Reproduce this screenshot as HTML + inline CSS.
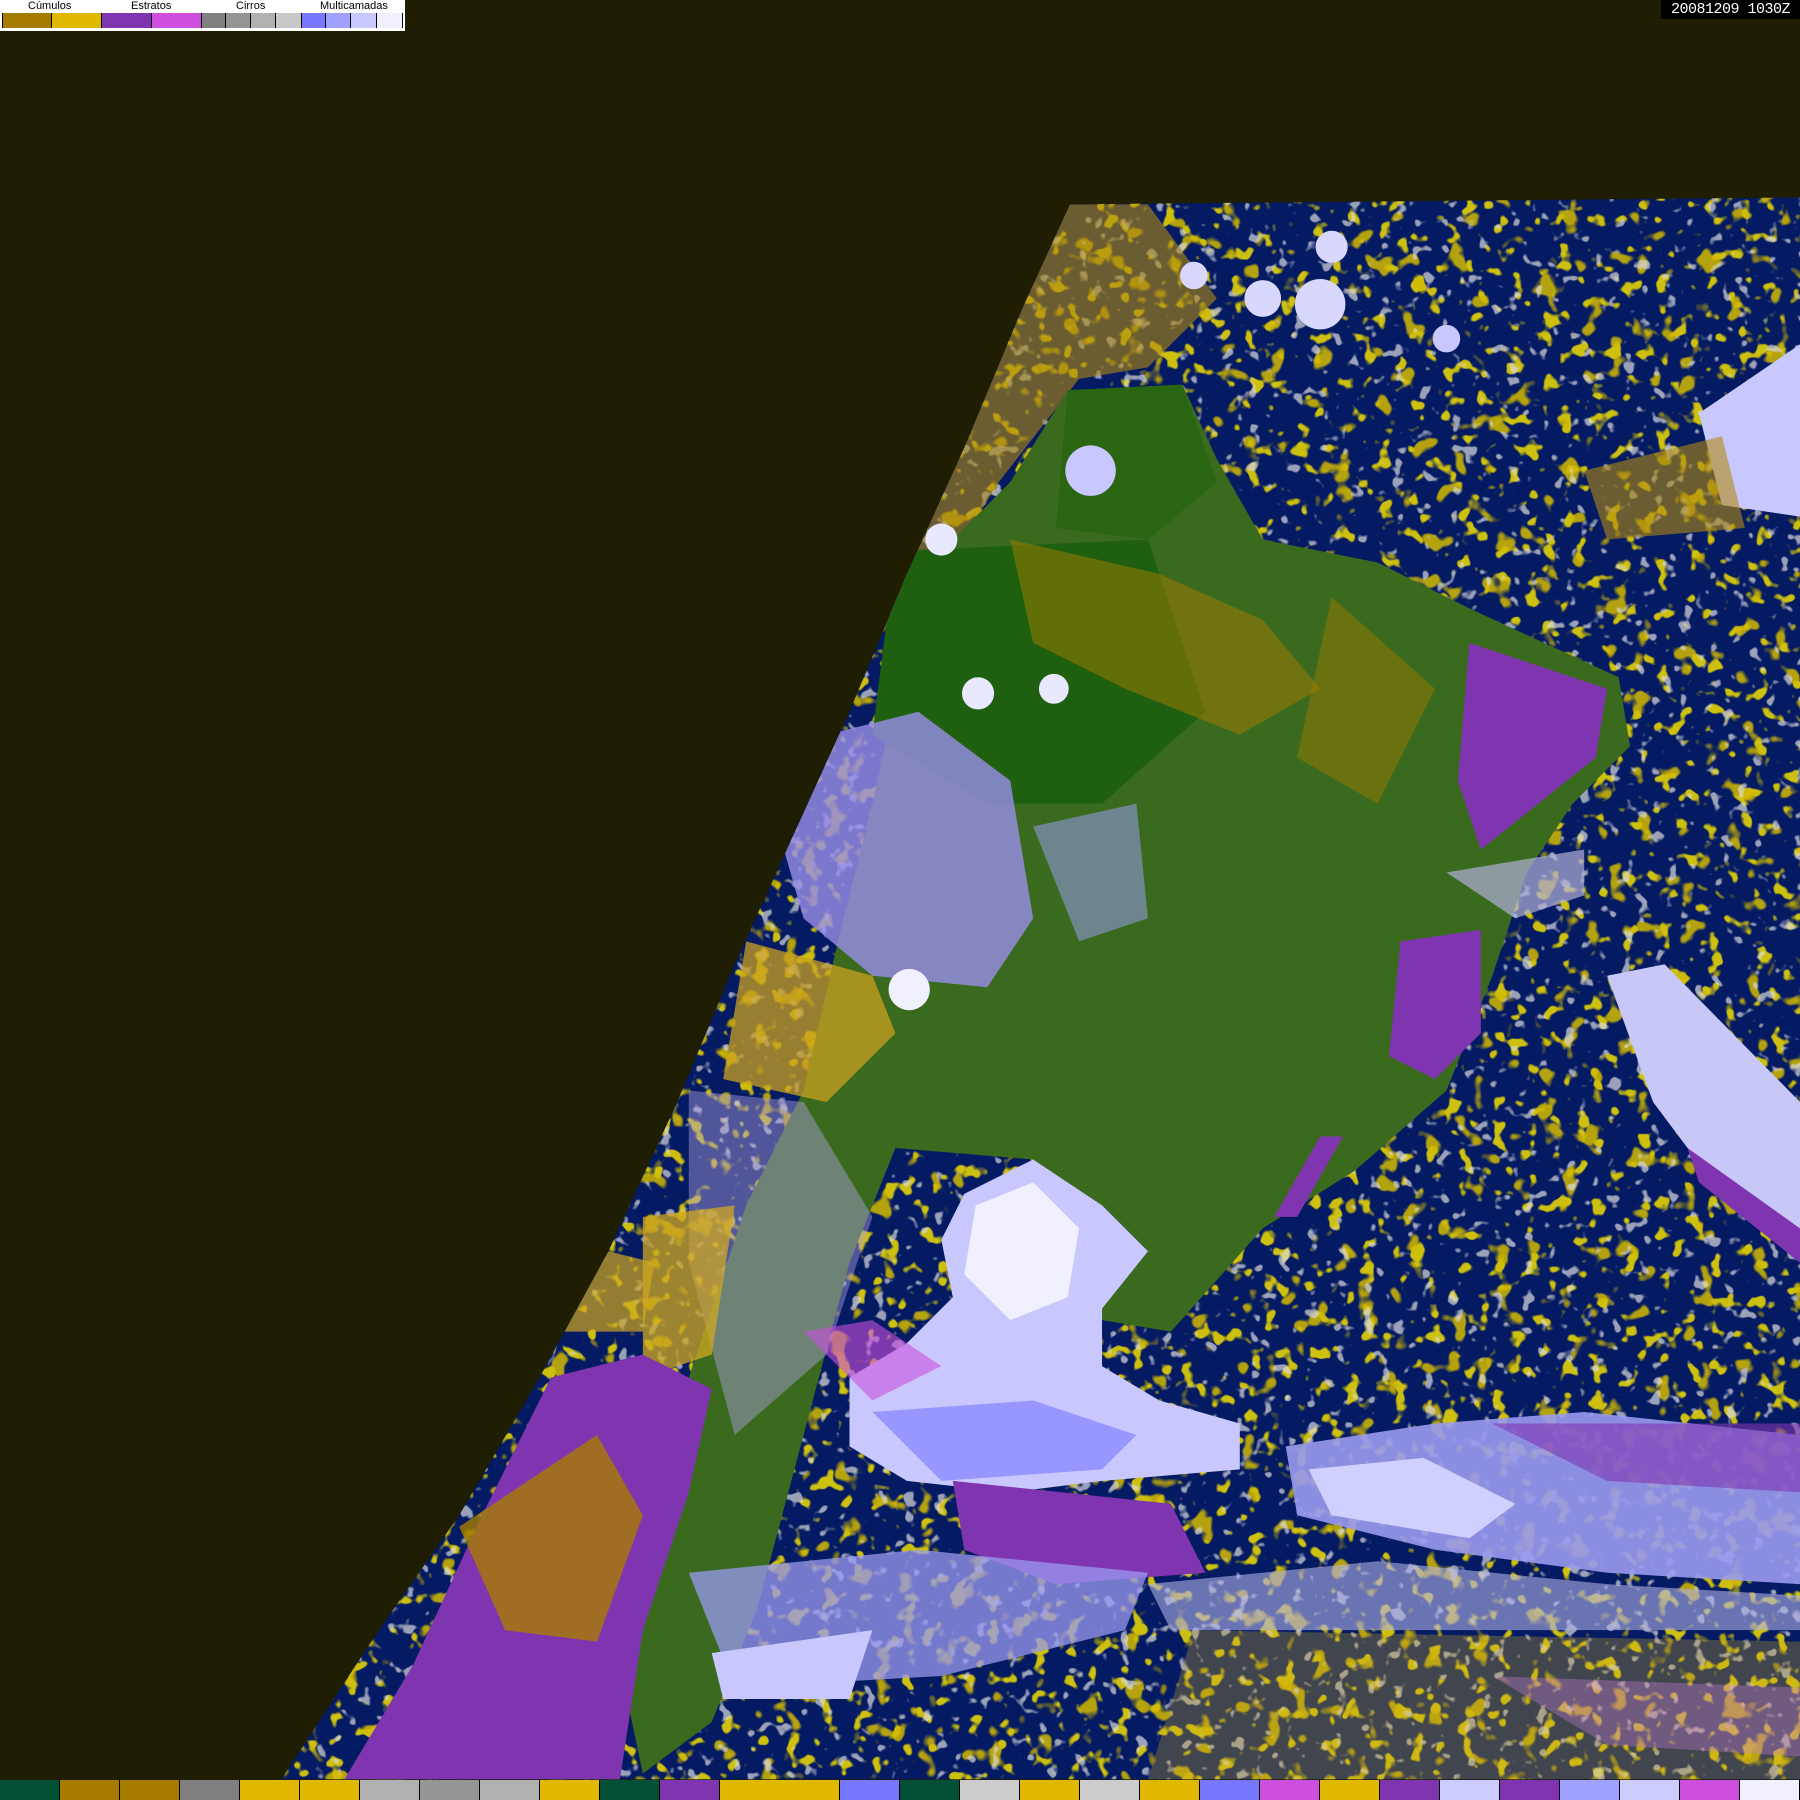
<!DOCTYPE html>
<html><head><meta charset="utf-8"><style>
html,body{margin:0;padding:0;background:#1f1d02;width:1800px;height:1800px;overflow:hidden;position:relative;font-family:"Liberation Sans",sans-serif}
svg{position:absolute;left:0;top:0}
#legend{position:absolute;left:0;top:0;width:405px;height:31px;background:#fff}
#legend .t{position:absolute;top:0;font-size:11px;color:#000;line-height:12px}
#legend .b{position:absolute;top:13px;height:15px;border-left:1px solid #000}
#ts{position:absolute;left:1661px;top:0;width:139px;height:19px;background:#000;color:#fff;font-family:"Liberation Mono",monospace;font-size:15px;line-height:19px;text-align:center;white-space:nowrap;overflow:hidden;letter-spacing:-0.5px}
#strip{position:absolute;left:0;top:1780px;width:1800px;height:20px;display:flex;background:#000}
#strip div{width:59px;height:20px;border-right:1px solid #000}
</style></head><body>
<svg width="1800" height="1800" viewBox="0 0 1568 1568">
<defs><clipPath id="d"><path d="M932,178 L1568,172 L1568,1550 L245,1550 L330,1420 L400,1320 L470,1200 L530,1090 L590,960 L640,840 L690,730 L740,620 L790,500 L840,390 L890,270 Z"/></clipPath>
<filter id="n"><feTurbulence type="fractalNoise" baseFrequency="0.07" numOctaves="2" seed="3"/><feColorMatrix values="0 0 0 0 0.88  0 0 0 0 0.72  0 0 0 0 0  0 0 0 12 -7.4"/></filter>
<filter id="n2"><feTurbulence type="fractalNoise" baseFrequency="0.05" numOctaves="2" seed="9"/><feColorMatrix values="0 0 0 0 0.65  0 0 0 0 0.49  0 0 0 0 0  0 0 0 12 -7.6"/></filter>
<filter id="n3"><feTurbulence type="fractalNoise" baseFrequency="0.08" numOctaves="2" seed="21"/><feColorMatrix values="0 0 0 0 0.7  0 0 0 0 0.7  0 0 0 0 0.72  0 0 0 12 -7.8"/></filter>
</defs>
<g clip-path="url(#d)">
<rect x="0" y="0" width="1568" height="1568" fill="#041a62"/>
<rect x="0" y="0" width="1568" height="1568" filter="url(#n)" opacity="0.85"/>
<rect x="0" y="0" width="1568" height="1568" filter="url(#n2)" opacity="0.85"/>
<rect x="0" y="0" width="1568" height="1568" filter="url(#n3)" opacity="0.7"/>
<path d="M880,178 L1000,178 L1060,260 L1000,320 L940,330 L870,420 L820,500 L760,560 L760,420 Z" fill="#b08a10" opacity="0.6"/>
<path d="M930,340 L1030,335 L1060,400 L1100,470 L1200,490 L1280,530 L1410,590 L1420,650 L1370,700 L1330,760 L1300,850 L1260,950 L1180,1020 L1100,1070 L1020,1160 L960,1150 L900,1010 L780,1000 L740,1100 L700,1250 L660,1400 L620,1500 L560,1545 L540,1450 L600,1200 L650,1050 L700,950 L730,820 L760,700 L790,560 L820,480 L880,420 Z" fill="#3a6a1e"/>
<path d="M780,480 L1000,470 L1050,620 L960,700 L860,700 L760,640 Z" fill="#1f6010"/>
<path d="M930,340 L1030,335 L1060,420 L1000,470 L920,460 Z" fill="#2a6512"/>
<path d="M880,470 L1010,500 L1100,540 L1150,600 L1080,640 L980,600 L900,560 Z" fill="#a67c00" opacity="0.5"/>
<path d="M1160,520 L1250,600 L1200,700 L1130,660 Z" fill="#a67c00" opacity="0.45"/>
<path d="M720,640 L800,620 L880,680 L900,800 L860,860 L760,850 L700,800 L680,730 Z" fill="#9a8ee8" opacity="0.8"/>
<path d="M650,820 L760,850 L780,900 L720,960 L630,940 Z" fill="#c9a020" opacity="0.75"/>
<path d="M900,720 L990,700 L1000,800 L940,820 Z" fill="#a0a0ff" opacity="0.5"/>
<circle cx="792" cy="862" r="18" fill="#f0f0ff"/>
<circle cx="852" cy="604" r="14" fill="#e8e8ff"/>
<circle cx="918" cy="600" r="13" fill="#e8e8ff"/>
<circle cx="820" cy="470" r="14" fill="#e8e8ff"/>
<circle cx="950" cy="410" r="22" fill="#c8c8ff"/>
<path d="M600,950 L700,960 L760,1060 L720,1180 L640,1250 L600,1100 Z" fill="#b0a0e0" opacity="0.45"/>
<path d="M560,1060 L640,1050 L620,1180 L560,1200 Z" fill="#d0a820" opacity="0.75"/>
<path d="M420,1320 L480,1200 L560,1180 L620,1210 L600,1300 L560,1420 L540,1550 L300,1550 L360,1450 Z" fill="#8035b0"/>
<path d="M400,1330 L520,1250 L560,1320 L520,1430 L440,1420 Z" fill="#a67c00" opacity="0.8"/>
<path d="M470,1160 L530,1090 L570,1100 L560,1160 Z" fill="#d0a820" opacity="0.7"/>
<path d="M1280,560 L1400,600 L1390,660 L1340,700 L1290,740 L1270,680 Z" fill="#8035b0"/>
<path d="M1220,820 L1290,810 L1290,900 L1250,940 L1210,920 Z" fill="#8035b0"/>
<path d="M1260,760 L1380,740 L1380,780 L1320,800 Z" fill="#b0b0d8" opacity="0.7"/>
<path d="M1150,990 L1170,990 L1130,1060 L1110,1060 Z" fill="#8035b0"/>
<path d="M1400,850 L1450,840 L1568,960 L1568,1070 L1500,1040 L1440,960 Z" fill="#c8c8f8"/>
<path d="M1470,1000 L1568,1070 L1568,1100 L1480,1030 Z" fill="#8035b0"/>
<path d="M1480,360 L1568,300 L1568,450 L1500,440 Z" fill="#c8c8ff"/>
<path d="M1380,410 L1500,380 L1520,460 L1400,470 Z" fill="#b08a10" opacity="0.6"/>
<circle cx="1100" cy="260" r="16" fill="#d8d8ff"/>
<circle cx="1150" cy="265" r="22" fill="#d8d8ff"/>
<circle cx="1160" cy="215" r="14" fill="#d8d8ff"/>
<circle cx="1040" cy="240" r="12" fill="#d8d8ff"/>
<circle cx="1260" cy="295" r="12" fill="#c8c8ff"/>
<path d="M840,1040 L900,1010 L960,1050 L1000,1090 L960,1140 L960,1190 L1010,1220 L1080,1240 L1080,1280 L960,1290 L880,1300 L790,1290 L740,1260 L740,1200 L790,1170 L830,1130 L820,1080 Z" fill="#c8c8ff"/>
<path d="M850,1050 L900,1030 L940,1070 L930,1130 L880,1150 L840,1110 Z" fill="#f0f0ff"/>
<path d="M760,1230 L900,1220 L990,1250 L960,1280 L820,1290 Z" fill="#7777ff" opacity="0.6"/>
<path d="M830,1290 L1020,1310 L1050,1370 L920,1380 L840,1350 Z" fill="#8035b0"/>
<path d="M700,1160 L760,1150 L820,1190 L760,1220 Z" fill="#cc50dd" opacity="0.6"/>
<path d="M1120,1260 L1250,1240 L1380,1230 L1568,1250 L1568,1380 L1400,1370 L1250,1350 L1130,1320 Z" fill="#9a9af0" opacity="0.9"/>
<path d="M1140,1280 L1240,1270 L1320,1310 L1280,1340 L1160,1320 Z" fill="#d0d0ff"/>
<path d="M1300,1240 L1568,1240 L1568,1300 L1400,1290 Z" fill="#8035b0" opacity="0.6"/>
<path d="M600,1370 L800,1350 L1000,1370 L980,1420 L820,1460 L640,1470 Z" fill="#9a9af0" opacity="0.75"/>
<path d="M620,1440 L760,1420 L740,1480 L630,1480 Z" fill="#c8c8ff"/>
<path d="M1000,1380 L1200,1360 L1400,1380 L1568,1390 L1568,1420 L1200,1420 L1020,1420 Z" fill="#b0b0e8" opacity="0.6"/>
<path d="M1040,1420 L1568,1430 L1568,1550 L1000,1550 Z" fill="#d0a820" opacity="0.3"/>
<path d="M1300,1460 L1568,1470 L1568,1530 L1400,1520 Z" fill="#cc80dd" opacity="0.35"/>
</g>
</svg>
<div id="legend">
<span class="t" style="left:28px">Cúmulos</span>
<span class="t" style="left:131px">Estratos</span>
<span class="t" style="left:236px">Cirros</span>
<span class="t" style="left:320px">Multicamadas</span>
<div class="b" style="left:2px;width:49px;background:#a67c00"></div>
<div class="b" style="left:51px;width:50px;background:#e0b800"></div>
<div class="b" style="left:101px;width:50px;background:#8035b0"></div>
<div class="b" style="left:151px;width:50px;background:#cc50dd"></div>
<div class="b" style="left:201px;width:24px;background:#808080"></div>
<div class="b" style="left:225px;width:25px;background:#959595"></div>
<div class="b" style="left:250px;width:25px;background:#b0b0b0"></div>
<div class="b" style="left:275px;width:26px;background:#c8c8c8"></div>
<div class="b" style="left:301px;width:24px;background:#7777ff"></div>
<div class="b" style="left:325px;width:25px;background:#a0a0ff"></div>
<div class="b" style="left:350px;width:26px;background:#c8c8ff"></div>
<div class="b" style="left:376px;width:25px;background:#f0f0ff;border-right:1px solid #000"></div>
</div>
<div id="ts">20081209 1030Z</div>
<div id="strip">
<div style="background:#045036"></div><div style="background:#a67c00"></div><div style="background:#a67c00"></div><div style="background:#808080"></div><div style="background:#e0b800"></div><div style="background:#e0b800"></div><div style="background:#b0b0b0"></div><div style="background:#959595"></div><div style="background:#b0b0b0"></div><div style="background:#e0b800"></div><div style="background:#045036"></div><div style="background:#8035b0"></div><div style="background:#e0b800;border-right:none;width:60px"></div><div style="background:#e0b800"></div><div style="background:#7777ff"></div><div style="background:#045036"></div><div style="background:#cccccc"></div><div style="background:#e0b800"></div><div style="background:#cccccc"></div><div style="background:#e0b800"></div><div style="background:#7777ff"></div><div style="background:#cc50dd"></div><div style="background:#e0b800"></div><div style="background:#8035b0"></div><div style="background:#ccccff"></div><div style="background:#8035b0"></div><div style="background:#a0a0ff"></div><div style="background:#ccccff"></div><div style="background:#cc50dd"></div><div style="background:#f0f0ff"></div>
</div>
</body></html>
